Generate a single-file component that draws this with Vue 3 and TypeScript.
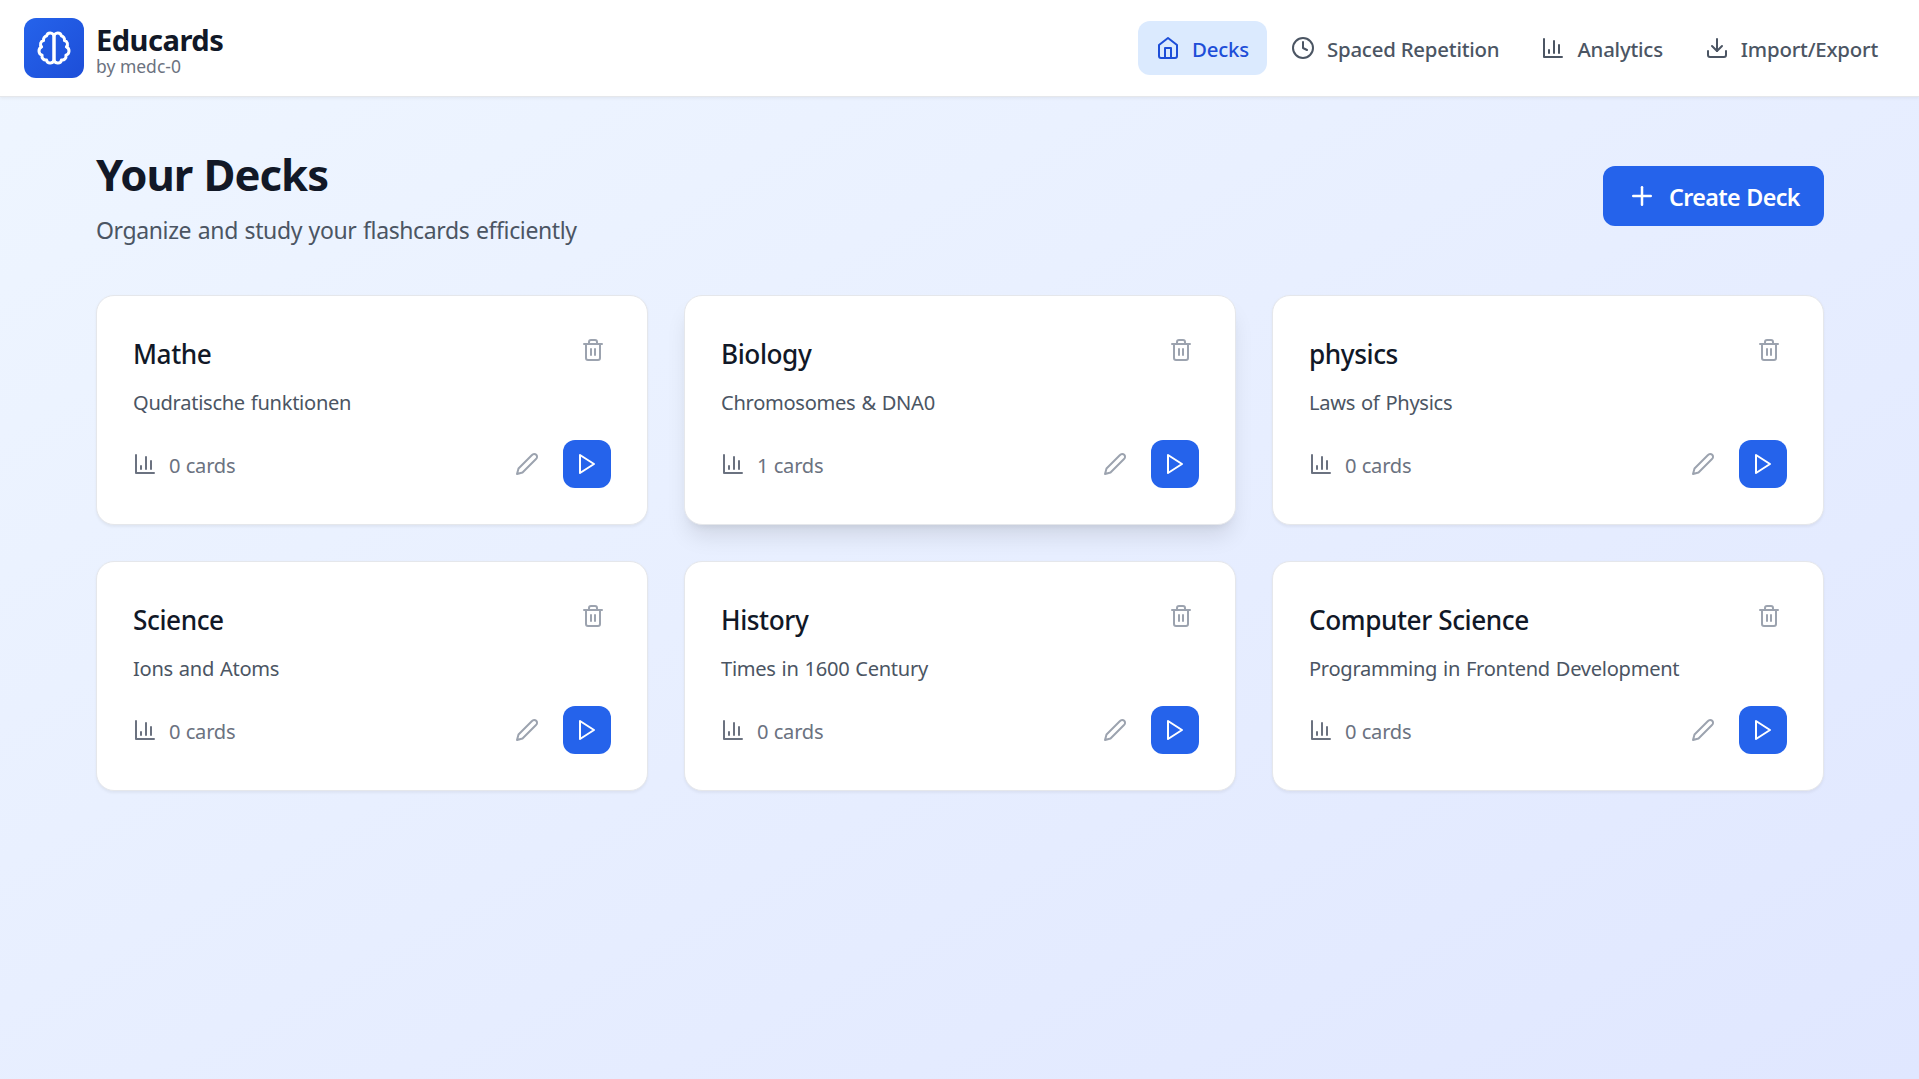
<script setup lang="ts">
import { ref } from 'vue'

interface Deck {
  id: number
  name: string
  description: string
  cards: number
}

interface NavItem {
  label: string
  paths: string[]
}

const chartPaths = ['M3 3v18h18', 'M18 17V9', 'M13 17V5', 'M8 17v-3']

const navItems: NavItem[] = [
  { label: 'Decks', paths: ['m3 9 9-7 9 7v11a2 2 0 0 1-2 2H5a2 2 0 0 1-2-2z', 'M9 22V12h6v10'] },
  { label: 'Spaced Repetition', paths: ['M22 12a10 10 0 1 1-20 0 10 10 0 0 1 20 0z', 'M12 6v6l4 2'] },
  { label: 'Analytics', paths: chartPaths },
  {
    label: 'Import/Export',
    paths: ['M21 15v4a2 2 0 0 1-2 2H5a2 2 0 0 1-2-2v-4', 'm7 10 5 5 5-5', 'M12 15V3'],
  },
]

const active = ref('Decks')
const raised = ref(2)

const decks: Deck[] = [
  { id: 1, name: 'Mathe', description: 'Qudratische funktionen', cards: 0 },
  { id: 2, name: 'Biology', description: 'Chromosomes & DNA0', cards: 1 },
  { id: 3, name: 'physics', description: 'Laws of Physics', cards: 0 },
  { id: 4, name: 'Science', description: 'Ions and Atoms', cards: 0 },
  { id: 5, name: 'History', description: 'Times in 1600 Century', cards: 0 },
  { id: 6, name: 'Computer Science', description: 'Programming in Frontend Development', cards: 0 },
]
</script>

<template>
  <div class="page">
    <header class="topbar">
      <div class="brand">
        <div class="logo">
          <svg class="icon icon-lg" viewBox="0 0 24 24">
            <path d="M9.5 2A2.5 2.5 0 0 1 12 4.5v15a2.5 2.5 0 0 1-4.96.44 2.5 2.5 0 0 1-2.96-3.08 3 3 0 0 1-.34-5.58 2.5 2.5 0 0 1 1.32-4.24 2.5 2.5 0 0 1 1.98-3A2.5 2.5 0 0 1 9.5 2Z" />
            <path d="M14.5 2A2.5 2.5 0 0 0 12 4.5v15a2.5 2.5 0 0 0 4.96.44 2.5 2.5 0 0 0 2.96-3.08 3 3 0 0 0 .34-5.58 2.5 2.5 0 0 0-1.32-4.24 2.5 2.5 0 0 0-1.98-3A2.5 2.5 0 0 0 14.5 2Z" />
          </svg>
        </div>
        <div class="brand-text">
          <div class="brand-name">Educards</div>
          <div class="brand-by">by medc-0</div>
        </div>
      </div>
      <nav class="nav">
        <button
          v-for="item in navItems"
          :key="item.label"
          class="nav-item"
          :class="{ active: active === item.label }"
          @click="active = item.label"
        >
          <svg class="icon" viewBox="0 0 24 24">
            <path v-for="d in item.paths" :key="d" :d="d" />
          </svg>
          <span class="label">{{ item.label }}</span>
        </button>
      </nav>
    </header>

    <main class="main">
      <section class="heading">
        <div>
          <h1 class="title">Your Decks</h1>
          <p class="subtitle">Organize and study your flashcards efficiently</p>
        </div>
        <button class="create">
          <svg class="icon icon-md" viewBox="0 0 24 24">
            <path d="M5 12h14" />
            <path d="M12 5v14" />
          </svg>
          <span class="create-label">Create Deck</span>
        </button>
      </section>

      <section class="grid">
        <article
          v-for="deck in decks"
          :key="deck.id"
          class="card"
          :class="{ raised: raised === deck.id }"
          @mouseenter="raised = deck.id"
        >
          <div class="card-top">
            <h2 class="card-title">{{ deck.name }}</h2>
            <button class="trash" aria-label="Delete">
              <svg class="icon" viewBox="0 0 24 24">
                <path d="M3 6h18" />
                <path d="M19 6v14c0 1-1 2-2 2H7c-1 0-2-1-2-2V6" />
                <path d="M8 6V4c0-1 1-2 2-2h4c1 0 2 1 2 2v2" />
                <path d="M10 11v6" />
                <path d="M14 11v6" />
              </svg>
            </button>
          </div>
          <p class="desc">{{ deck.description }}</p>
          <div class="card-bottom">
            <div class="count">
              <svg class="icon" viewBox="0 0 24 24">
                <path v-for="d in chartPaths" :key="d" :d="d" />
              </svg>
              <span class="label">{{ deck.cards }} cards</span>
            </div>
            <div class="actions">
              <button class="edit" aria-label="Edit">
                <svg class="icon" viewBox="0 0 24 24">
                  <path d="M17 3a2.85 2.83 0 1 1 4 4L7.5 20.5 2 22l1.5-5.5Z" />
                </svg>
              </button>
              <button class="play" aria-label="Study">
                <svg class="icon" viewBox="0 0 24 24">
                  <path d="M5 3l14 9-14 9z" />
                </svg>
              </button>
            </div>
          </div>
        </article>
      </section>
    </main>
  </div>
</template>

<style>
body {
  margin: 0;
}
</style>

<style scoped>
.page {
  min-height: 100vh;
  box-sizing: border-box;
  background: linear-gradient(to bottom right, #eff6ff, #e0e7ff);
  font-family: 'Noto Sans', 'Open Sans', sans-serif;
  color: #111827;
}
button {
  border: 0;
  margin: 0;
  padding: 0;
  background: none;
  font: inherit;
  color: inherit;
  display: flex;
  align-items: center;
  cursor: pointer;
}
h1,
h2,
p {
  margin: 0;
}
.icon {
  width: 24px;
  height: 24px;
  flex: none;
  display: block;
  fill: none;
  stroke: currentColor;
  stroke-width: 2;
  stroke-linecap: round;
  stroke-linejoin: round;
}
.icon-md {
  width: 30px;
  height: 30px;
}
.icon-lg {
  width: 36px;
  height: 36px;
}
.topbar {
  height: 96px;
  padding: 0 23px 0 24px;
  display: flex;
  align-items: center;
  justify-content: space-between;
  background: #fff;
  border-bottom: 1px solid #e5e7eb;
  box-shadow: 0 1.5px 3px rgba(0, 0, 0, 0.05);
}
.brand {
  display: flex;
  gap: 12px;
}
.logo {
  width: 60px;
  height: 60px;
  border-radius: 12px;
  display: flex;
  align-items: center;
  justify-content: center;
  color: #fff;
  background: linear-gradient(to bottom right, #2563eb, #1d4ed8);
}
.brand-text {
  padding-top: 6px;
}
.brand-name {
  font-size: 29.1px;
  line-height: 32px;
  font-weight: 700;
  letter-spacing: -0.53px;
}
.brand-by {
  font-size: 17.5px;
  line-height: 20px;
  color: #6b7280;
}
.nav {
  display: flex;
  gap: 6px;
}
.nav-item {
  height: 54px;
  padding: 0 18px;
  gap: 12px;
  border-radius: 12px;
  color: #4b5563;
  font-size: 20.4px;
  font-weight: 500;
  letter-spacing: -0.21px;
}
.nav-item.active {
  background: #dbeafe;
  color: #1d4ed8;
}
.label {
  line-height: 30px;
  padding-top: 2px;
  white-space: nowrap;
}
.main {
  padding: 48px 95px 0 96px;
}
.heading {
  display: flex;
  align-items: center;
  justify-content: space-between;
  margin-bottom: 48px;
}
.title {
  font-size: 43.6px;
  line-height: 58px;
  font-weight: 700;
  letter-spacing: -0.98px;
  word-spacing: 1px;
}
.subtitle {
  margin-top: 10px;
  font-size: 23px;
  line-height: 34px;
  letter-spacing: -0.38px;
  word-spacing: 1px;
  color: #4b5563;
}
.create {
  height: 60px;
  width: 221px;
  box-sizing: border-box;
  padding: 0 24px;
  gap: 12px;
  border-radius: 12px;
  background: #2563eb;
  color: #fff;
}
.create-label {
  font-size: 23.3px;
  line-height: 34px;
  padding-top: 2px;
  font-weight: 600;
  letter-spacing: -0.65px;
  word-spacing: 1px;
  white-space: nowrap;
}
.grid {
  display: grid;
  grid-template-columns: repeat(3, 1fr);
  gap: 36px;
}
.card {
  padding: 36px;
  border: 1px solid #e5e7eb;
  border-radius: 18px;
  background: #fff;
  box-shadow: 0 1.5px 3px rgba(0, 0, 0, 0.05);
}
.card.raised {
  box-shadow:
    0 15px 22.5px -4.5px rgba(0, 0, 0, 0.1),
    0 6px 9px -6px rgba(0, 0, 0, 0.1);
}
.card-top {
  display: flex;
  align-items: flex-start;
  justify-content: space-between;
}
.card-title {
  font-size: 26.2px;
  line-height: 44px;
  font-weight: 550;
  letter-spacing: -0.43px;
}
.trash {
  padding: 6px;
  color: #9ca3af;
}
.desc {
  margin-top: 12px;
  font-size: 20.1px;
  line-height: 30px;
  letter-spacing: -0.29px;
  word-spacing: 1px;
  color: #4b5563;
}
.card-bottom {
  margin-top: 22px;
  display: flex;
  align-items: center;
  justify-content: space-between;
}
.count {
  display: flex;
  align-items: center;
  gap: 12px;
  font-size: 20.1px;
  letter-spacing: -0.25px;
  word-spacing: 0.5px;
  color: #6b7280;
}
.count .label {
  padding-top: 4px;
}
.actions {
  display: flex;
  gap: 12px;
}
.edit {
  padding: 12px;
  color: #9ca3af;
}
.play {
  padding: 12px;
  border-radius: 12px;
  background: #2563eb;
  color: #fff;
}
</style>
